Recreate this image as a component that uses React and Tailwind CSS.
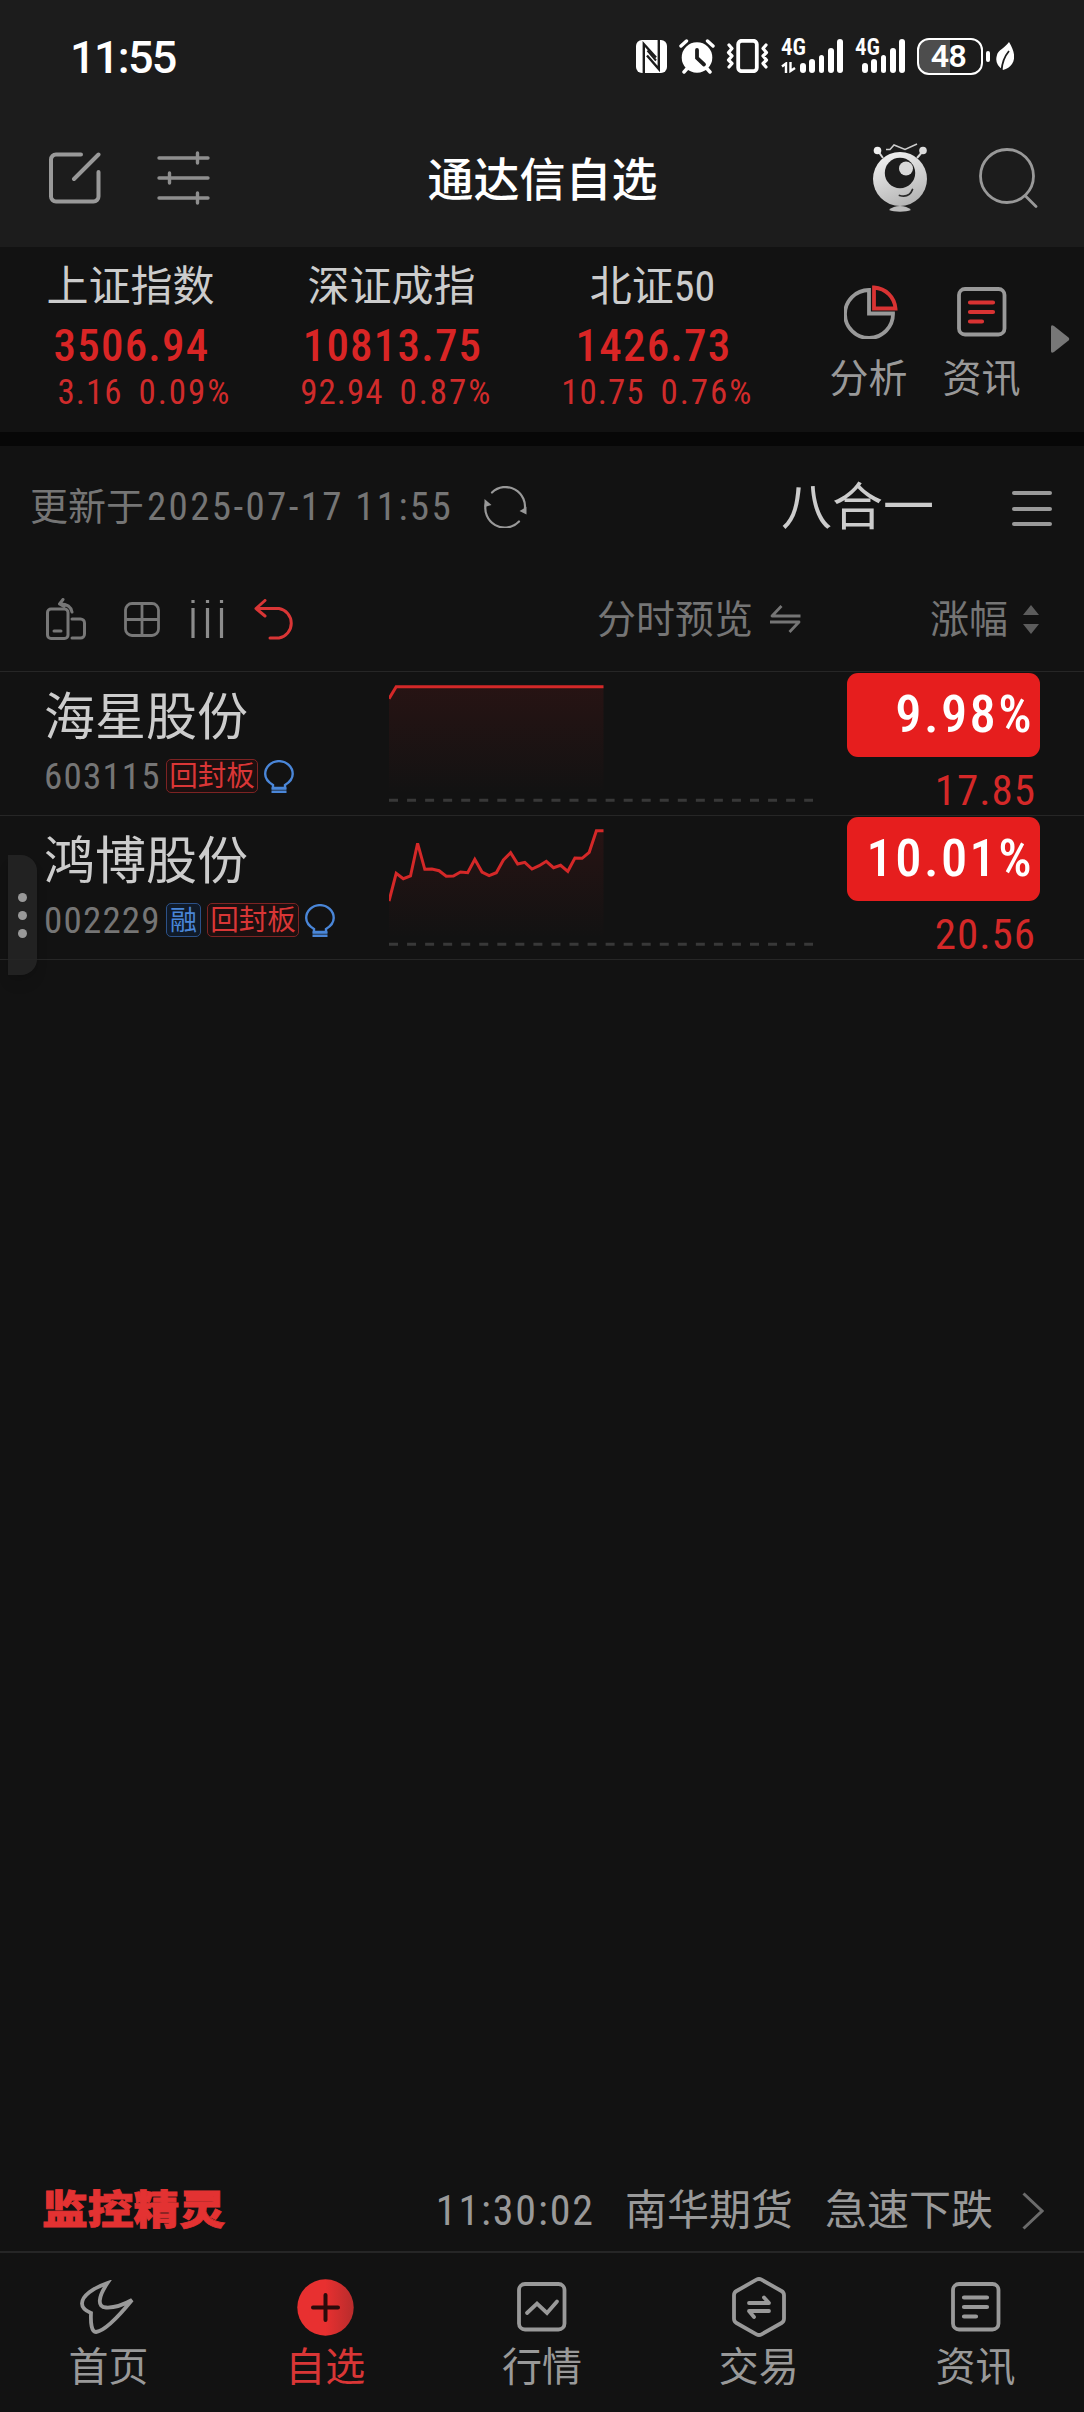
import { useState } from 'react';

const indices = [
  { name: '上证指数', value: '3506.94', change: '3.16', percent: '0.09%' },
  { name: '深证成指', value: '10813.75', change: '92.94', percent: '0.87%' },
  { name: '北证50', value: '1426.73', change: '10.75', percent: '0.76%' },
];

const stocks = [
  {
    code: '603115',
    name: '海星股份',
    margin: false,
    tag: '回封板',
    percent: '9.98%',
    price: '17.85',
    points: [26.7].concat(Array(30).fill(14.7)),
  },
  {
    code: '002229',
    name: '鸿博股份',
    margin: true,
    tag: '回封板',
    percent: '10.01%',
    price: '20.56',
    points: [
      85, 57.3, 62.7, 60, 27.3, 53.3, 53, 54.7, 60.3, 60, 56, 56.7, 43.3, 56, 59.7, 56.7,
      44, 36.7, 48, 46.3, 53, 49.7, 45.3, 51.7, 49.3, 55.3, 42, 42.3, 36.3, 14.7, 14.7,
    ],
  },
];

/* ---------- status bar icons ---------- */

const NfcIcon = () => (
  <svg width="31" height="33" viewBox="0 0 31 33" fill="none">
    <rect width="31" height="33" rx="6" fill="#fff" />
    <path d="M7.8 33V4L20 17.5M22.8 0V29L11 15.5" stroke="#1c1c1c" strokeWidth="2.4" />
    <path d="M11.5 10.5 20 20.5" stroke="#1c1c1c" strokeWidth="2" />
  </svg>
);

const AlarmIcon = () => (
  <svg width="36" height="35" viewBox="0 0 36 35" fill="none" strokeLinecap="round">
    <circle cx="18" cy="18.5" r="15.3" fill="#fff" />
    <path d="M2 7 7.5 2M34 7 28.5 2M5 33l4-4.5M31 33l-4-4.5" stroke="#fff" strokeWidth="3.4" />
    <path d="M18 11v8l7 6.5" stroke="#1c1c1c" strokeWidth="3.8" />
  </svg>
);

const VibrateIcon = () => (
  <svg width="43" height="34" viewBox="0 0 43 34" fill="none" stroke="#fff" strokeLinejoin="round" strokeLinecap="round">
    <rect x="12.2" y="1.8" width="18.6" height="30.4" rx="3.5" strokeWidth="3.8" />
    <path d="M3 6l3 3.5-3.5 4L6 17l-3.5 4L6 24.5 3 28M40 6l-3 3.5 3.5 4L37 17l3.5 4-3.5 3.5 3 3.5" strokeWidth="3.2" />
  </svg>
);

const barHeights = [10, 14, 18, 25, 34];

const SignalBars = () => (
  <div className="flex items-end gap-[3.4px]">
    {barHeights.map((h) => (
      <span key={h} className="w-[5.9px] rounded-full bg-white" style={{ height: h }} />
    ))}
  </div>
);

const Signal = ({ data }) => (
  <div className={data ? 'relative flex h-[34px] w-[62px] items-end justify-end' : 'relative flex h-[34px] w-[50px] items-end justify-end'}>
    <span className="absolute left-0 top-0 text-[23px] font-semibold leading-[18px]">4G</span>
    {data && (
      <svg className="absolute bottom-0 left-0" width="15" height="11" viewBox="0 0 15 11" fill="none" stroke="#fff" strokeWidth="2.4">
        <path d="M1 4.5 5 1.5V11M9.5 0v9L14 6" />
      </svg>
    )}
    <SignalBars />
  </div>
);

const LeafIcon = () => (
  <svg width="18" height="29" viewBox="0 0 18 29" fill="none">
    <path d="M13 0c5 8 7 16 3 22-2 3-5 5-9 6-6-4-8-9-6-15C2 8 9 6 13 0Z" fill="#fff" />
    <path d="M13 9C8 15 6 20 5.500 29" stroke="#1c1c1c" strokeWidth="1.8" />
  </svg>
);

const StatusBar = () => (
  <div className="flex h-[112px] items-center pl-[70px] pr-[70px] text-white">
    <span className="pt-[3px] text-[45px] font-medium leading-[50px] tracking-[-1.700px] font-stretch-100%">11:55</span>
    <div className="ml-auto flex items-center">
      <NfcIcon />
      <span className="ml-[12px]"><AlarmIcon /></span>
      <span className="ml-[11px]"><VibrateIcon /></span>
      <span className="ml-[12px]"><Signal data /></span>
      <span className="ml-[12px]"><Signal /></span>
      <div className="ml-[12px] flex h-[37px] w-[66px] items-center justify-center rounded-[12px] border-[2.5px] border-white bg-linear-to-r from-[#4d4d4d] from-50% to-[#1c1c1c] to-50% pr-[3px] text-[32px] font-semibold leading-none tracking-[-0.500px] font-stretch-100%">
        48
      </div>
      <span className="ml-[3px] h-[11px] w-[4px] rounded-sm bg-white" />
      <span className="ml-[6px]"><LeafIcon /></span>
    </div>
  </div>
);

/* ---------- title bar ---------- */

const EditIcon = () => (
  <svg width="52" height="52" viewBox="0 0 52 52" fill="none" stroke="#999" strokeWidth="4" strokeLinecap="round">
    <path d="M32 2.500H7a5 5 0 0 0-5 5v37a5 5 0 0 0 5 5h37.500a5 5 0 0 0 5-5V20M49.500 2.500 25 27" />
  </svg>
);

const SettingsIcon = () => (
  <svg width="53" height="54" viewBox="0 0 53 54" fill="none" stroke="#8e8e8e" strokeWidth="3.4" strokeLinecap="round">
    <path d="M2 7h49M2 27h49M2 47h49M40.500 2v10M12.500 22v10M40.500 42v10" />
  </svg>
);

const RobotIcon = () => (
  <svg width="54" height="69" viewBox="0 0 54 69" fill="none">
    <defs>
      <linearGradient id="robot" x1="0.3" y1="0" x2="0.7" y2="1">
        <stop offset="0" stopColor="#f0f0f0" />
        <stop offset="1" stopColor="#b2b2b2" />
      </linearGradient>
    </defs>
    <path d="M5 8l5 7M50 8l-6 7" stroke="#d8d8d8" strokeWidth="2" />
    <circle cx="4.500" cy="7.500" r="3.800" fill="#f0f0f0" />
    <circle cx="50" cy="7.500" r="3.800" fill="#dcdcdc" />
    <path d="M13 6.500h4l4-4.500 11 4.500L44 1" stroke="#ccc" strokeWidth="1.500" />
    <circle cx="27" cy="36" r="27" fill="url(#robot)" />
    <circle cx="27" cy="30" r="15.200" fill="#1c1c1c" />
    <circle cx="33" cy="25.500" r="7" fill="#d8d8d8" />
    <path d="M26.500 52.500c6 1.500 11-.5 13-6" stroke="#2a2a2a" strokeWidth="1.800" strokeLinecap="round" />
    <path d="M16 67c5-5.500 17-5.500 22 0-5 2.200-17 2.200-22 0Z" fill="#bbb" />
  </svg>
);

const SearchIcon = () => (
  <svg width="59" height="60" viewBox="0 0 59 60" fill="none" stroke="#999" strokeWidth="2.800" strokeLinecap="round">
    <circle cx="28" cy="28" r="26.500" />
    <path d="M46.500 48 57 58.500" />
  </svg>
);

const TitleBar = () => (
  <div className="flex h-[135px] items-center pl-[49px] pr-[46px] pb-[4px]">
    <button className="w-[52px]"><EditIcon /></button>
    <button className="ml-[56px] w-[53px]"><SettingsIcon /></button>
    <h1 className="flex-1 pl-[2px] pt-[5px] text-center text-[46px] font-medium leading-[60px] text-white">通达信自选</h1>
    <button className="w-[54px]"><RobotIcon /></button>
    <button className="ml-[52px] w-[59px]"><SearchIcon /></button>
  </div>
);

/* ---------- index strip ---------- */

const PieIcon = () => (
  <svg width="54" height="54" viewBox="0 0 54 54" fill="none" strokeWidth="3.800">
    <path d="M25 5A24 24 0 1 0 49 28.500H25Z" stroke="#999" />
    <path d="M30 2.500v21h21.500C50.500 12 42 3.500 30 2.500Z" stroke="#d93333" />
  </svg>
);

const NewsIcon = ({ lines }) => (
  <svg width="50" height="50" viewBox="0 0 50 50" fill="none" strokeLinecap="round">
    <rect x="2" y="2" width="45.500" height="45.500" rx="6" stroke="#999" strokeWidth="3.800" />
    <path d="M13 15.500h23M13 25h23M13 34.500h12" stroke={lines} strokeWidth="4.200" />
  </svg>
);

const IndexStrip = () => (
  <section className="flex h-[185px]">
    {indices.map((item) => (
      <div key={item.name} className="flex w-[261px] flex-col items-center pt-[16px]">
        <div className="h-[48px] text-[42px] leading-[48px] text-[#ccc]">{item.name}</div>
        <div className="h-[70px] text-[45px] font-medium leading-[70px] tracking-[1.200px] pl-[2px] text-[#d92525]">{item.value}</div>
        <div className="grid w-full grid-cols-2 gap-[16px] text-[35px] leading-[24px] text-[#cf2b2b]">
          <span className="text-right tracking-[1px]">{item.change}</span>
          <span className="tracking-[1.900px]">{item.percent}</span>
        </div>
      </div>
    ))}
    <div className="ml-[29px] flex w-[113px] flex-col items-center pt-[38px] text-[39px] leading-[48px] text-[#999]">
      <span className="ml-[4px]"><PieIcon /></span>
      <span className="mt-[16px]">分析</span>
    </div>
    <div className="flex w-[113px] flex-col items-center pt-[40px] text-[39px] leading-[48px] text-[#999]">
      <span className="ml-px"><NewsIcon lines="#d93333" /></span>
      <span className="mt-[18px]">资讯</span>
    </div>
    <svg className="ml-[13px] mt-[78px]" width="19" height="28" viewBox="0 0 19 28">
      <path d="M0 2Q0-1 3 1L17.500 12.500Q19 14 17.500 15.500L3 27Q0 29 0 26Z" fill="#777" />
    </svg>
  </section>
);

/* ---------- update row + toolbar ---------- */

const RefreshIcon = () => (
  <svg width="43" height="42" viewBox="0 0 43 42" fill="none">
    <path d="M8 6.500A19.500 19.500 0 0 1 40.500 25M35 35.500A19.500 19.500 0 0 1 2 17" stroke="#999" strokeWidth="2.200" strokeLinecap="round" />
    <path d="M42.500 21v7.500L35.500 25ZM.5 21v-8L7.500 19Z" fill="#999" />
  </svg>
);

const UpdateRow = () => (
  <section className="flex h-[121px] items-center pl-[30px] pr-[32px]">
    <span className="pt-px text-[38px] leading-[50px] text-[#757575]">
      更新于<span className="pl-[3px] text-[39px] tracking-[2.350px]">2025-07-17 11:55</span>
    </span>
    <span className="ml-[31px]"><RefreshIcon /></span>
    <span className="ml-auto pt-[3px] text-[51px] leading-[60px] text-[#ccc]">八合一</span>
    <div className="ml-[78px] mt-[4px] flex w-[40px] flex-col gap-[11.500px]">
      <span className="h-[4px] rounded-full bg-[#999]" />
      <span className="h-[4px] rounded-full bg-[#999]" />
      <span className="h-[4px] rounded-full bg-[#999]" />
    </div>
  </section>
);

const RotateIcon = () => (
  <svg width="41" height="42" viewBox="0 0 41 42" fill="none" stroke="#777" strokeWidth="3" strokeLinecap="round" strokeLinejoin="round">
    <rect x="1.500" y="11" width="20.500" height="29.500" rx="3.500" />
    <path d="M8 33h7M26 21h8.500a4 4 0 0 1 4 4v11a4 4 0 0 1-4 4H26M17 1.500 13.500 6 18 8.500M14 6c7 0 11 2 12 8" />
  </svg>
);

const GridIcon = () => (
  <svg width="36" height="35" viewBox="0 0 36 35" fill="none" stroke="#777" strokeWidth="2.800">
    <rect x="1.500" y="1.500" width="33" height="32" rx="6.500" />
    <path d="M18 1.500v32M1.500 17.500h33" />
  </svg>
);

const ColumnsIcon = () => (
  <svg width="33" height="38" viewBox="0 0 33 38" fill="none" stroke="#8c8c8c" strokeWidth="3.200">
    <path d="M2 0v3M2 8v30M16.500 0v3M16.500 8v30M30.500 0v3M30.500 8v30" />
  </svg>
);

const UndoIcon = () => (
  <svg width="42" height="41" viewBox="0 0 42 41" fill="none" stroke="#d93636" strokeWidth="3" strokeLinecap="round" strokeLinejoin="round">
    <path d="M11 1.500 2 9.500l9 7.500M2 9.500h23a15 15 0 0 1 0 29.500h-9" />
  </svg>
);

const SwapIcon = () => (
  <svg width="31" height="28" viewBox="0 0 31 28" fill="none" stroke="#757575" strokeWidth="2.800" strokeLinejoin="round">
    <path d="M11.500 1 2 11h28.500M0 17h29L19.500 27" />
  </svg>
);

const Toolbar = () => (
  <section className="flex h-[104px] items-center pl-[46px] pr-[45px]">
    <RotateIcon />
    <span className="ml-[37px]"><GridIcon /></span>
    <span className="ml-[31px]"><ColumnsIcon /></span>
    <span className="ml-[30px]"><UndoIcon /></span>
    <span className="ml-auto pt-px text-[39px] leading-[50px] text-[#757575]">分时预览</span>
    <span className="ml-[17px]"><SwapIcon /></span>
    <span className="ml-[129px] pt-px text-[39px] leading-[50px] text-[#757575]">涨幅</span>
    <svg className="ml-[15px]" width="16" height="29" viewBox="0 0 16 29" fill="#5c5c5c">
      <path d="M8 0 16 10H0ZM8 29 0 19h16Z" />
    </svg>
  </section>
);

/* ---------- stock list ---------- */

const BulbIcon = () => (
  <svg width="30" height="33" viewBox="0 0 30 33" fill="none" stroke="#4a86d8" strokeWidth="2.400">
    <path d="M9 28v-3C4 22 1.200 18.500 1.200 14a13.700 12.800 0 0 1 27.500 0c0 4.500-2.700 8-7.700 11v3Z" />
    <path d="M7.500 31.800h15M7.500 28.500h15" />
  </svg>
);

const Sparkline = ({ points, id }) => {
  const step = 214.5 / (points.length - 1);
  const line = points.map((y, i) => `${(i * step).toFixed(1)},${y}`).join(' ');
  return (
    <svg width="424" height="143" viewBox="0 0 424 143" fill="none">
      <defs>
        <linearGradient id={id} gradientUnits="userSpaceOnUse" x1="0" y1="14" x2="0" y2="122">
          <stop offset="0" stopColor="#e62020" stopOpacity="0.1" />
          <stop offset="1" stopColor="#e62020" stopOpacity="0" />
        </linearGradient>
      </defs>
      <polygon points={`0,122 ${line} 214.5,122`} fill={`url(#${id})`} />
      <polyline points={line} stroke="#d42828" strokeWidth="3" />
      <path d="M0 128.300H424" stroke="#383838" strokeWidth="3" strokeDasharray="9 9.050" />
    </svg>
  );
};

const StockRow = ({ stock }) => (
  <li className="flex h-[144px] border-b border-[#262626]">
    <div className="w-[389px] pl-[44px] pt-[16px]">
      <div className="h-[60px] text-[51px] leading-[60px] text-[#ccc]">{stock.name}</div>
      <div className="flex h-[56px] items-center">
        <span className="w-[122px] pt-px text-[37px] leading-[56px] tracking-[1.200px] text-[#757575]">{stock.code}</span>
        {stock.margin && (
          <span className="mr-[6px] flex h-[34px] w-[35px] items-center justify-center rounded-[5px] border border-[#2c5188] bg-[#101a28] pt-[2px] text-[27px] leading-none text-[#4a86d8]">融</span>
        )}
        <span className="mr-[6px] flex h-[34px] w-[92px] items-center justify-center rounded-[5px] border border-[#7d2323] bg-[#1d1010] pt-[2px] text-[28.500px] leading-none text-[#d93636]">{stock.tag}</span>
        <BulbIcon />
      </div>
    </div>
    <Sparkline points={stock.points} id={`fill-${stock.code}`} />
    <div className="ml-auto mr-[44px] w-[193px] pt-px text-right">
      <div className="h-[84px] rounded-[11px] bg-[#e61e1e] pr-[6px] text-[52.500px] font-medium leading-[83px] tracking-[2.400px] text-white">{stock.percent}</div>
      <div className="mt-[8px] h-[50px] pr-[4px] text-[43px] leading-[51px] tracking-[1px] text-[#d42828]">{stock.price}</div>
    </div>
  </li>
);

/* ---------- bottom ---------- */

const MonitorBar = () => (
  <section className="flex h-[82px] items-center pl-[42px] pr-[40px] pt-[2px] text-[42px] leading-[50px] text-[#999]">
    <span className="origin-center scale-y-[0.86] text-[45.800px] font-black text-[#e33232] [-webkit-text-stroke:1px]">监控精灵</span>
    <span className="ml-auto tracking-[1.900px]">11:30:02</span>
    <span className="ml-[30px]">南华期货</span>
    <span className="ml-[32px]">急速下跌</span>
    <svg className="ml-[29px]" width="22" height="38" viewBox="0 0 22 38" fill="none" stroke="#6b6b6b" strokeWidth="3">
      <path d="M1.500 1.500 20 19 1.500 36.500" />
    </svg>
  </section>
);

const HomeIcon = () => (
  <svg width="57" height="54" viewBox="0 0 57 54" fill="none" stroke="#999" strokeWidth="3.800">
    <path d="M27.500 3C13 8 2 16 2 23.500c0 4 3 7 9 9.500-.5 10 .5 19 5 19C24 51 39 36 52 20 43 25 34 28 26 27.500 17 27 18 17 27.500 3Z" />
  </svg>
);

const PlusIcon = () => (
  <svg width="57" height="57" viewBox="0 0 57 57" fill="none">
    <defs>
      <linearGradient id="plus">
        <stop offset="0.5" stopColor="#e83030" />
        <stop offset="1" stopColor="#b82c2c" />
      </linearGradient>
    </defs>
    <circle cx="28.500" cy="28.500" r="28.200" fill="url(#plus)" />
    <path d="M28.500 16v25M16 28.500h25" stroke="#2a0b0b" strokeWidth="4" strokeLinecap="round" />
  </svg>
);

const ChartIcon = () => (
  <svg width="50" height="50" viewBox="0 0 50 50" fill="none" stroke="#999" strokeWidth="3.800">
    <rect x="2" y="2" width="45.500" height="45.500" rx="6" />
    <path d="m10 31 10-9.500 10 9.500 10-11.500" strokeLinecap="round" />
  </svg>
);

const TradeIcon = () => (
  <svg width="54" height="60" viewBox="0 0 54 60" fill="none" stroke="#999" strokeWidth="3.800" strokeLinecap="round" strokeLinejoin="round">
    <path d="M24.500 2.700a5 5 0 0 1 5 0L49.500 14a5 5 0 0 1 2.500 4.300v23.400a5 5 0 0 1-2.500 4.300l-20 11.300a5 5 0 0 1-5 0L4.500 46A5 5 0 0 1 2 41.700V18.300A5 5 0 0 1 4.500 14Z" />
    <path d="M17 26h20l-5-5.500M37 34H17l5 6" />
  </svg>
);

const tabs = [
  { label: '首页', icon: <HomeIcon /> },
  { label: '自选', icon: <PlusIcon /> },
  { label: '行情', icon: <ChartIcon /> },
  { label: '交易', icon: <TradeIcon /> },
  { label: '资讯', icon: <NewsIcon lines="#999" /> },
];

const App = () => {
  const [active, setActive] = useState('自选');

  return (
    <div className="relative flex h-[2412px] w-[1084px] flex-col overflow-hidden bg-[#121212] font-[Roboto,'Noto_Sans_CJK_SC',sans-serif] font-stretch-75%">
      <header className="bg-[#1c1c1c]">
        <StatusBar />
        <TitleBar />
      </header>
      <IndexStrip />
      <div className="h-[14px] bg-[#070707]" />
      <UpdateRow />
      <Toolbar />
      <ul className="border-t border-[#262626]">
        {stocks.map((stock) => (
          <StockRow key={stock.code} stock={stock} />
        ))}
      </ul>

      <div className="flex-1" />
      <MonitorBar />
      <nav className="grid h-[161px] grid-cols-5 border-t-2 border-[#262626]">
        {tabs.map((tab) => (
          <button key={tab.label} onClick={() => setActive(tab.label)} className="flex flex-col items-center pt-[24px]">
            <span className="flex h-[60px] items-center">{tab.icon}</span>
            <span className={`mt-[7px] text-[40px] leading-[48px] ${active === tab.label ? 'text-[#d93636]' : 'text-[#999]'}`}>
              {tab.label}
            </span>
          </button>
        ))}
      </nav>

      {/* drag handle floating over the list */}
      <div className="absolute left-[8px] top-[855px] flex h-[120px] w-[29px] flex-col items-center justify-center gap-[9px] rounded-r-[16px] bg-[#262626]/85 shadow-lg">
        <span className="h-[9px] w-[9px] rounded-full bg-[#999]" />
        <span className="h-[9px] w-[9px] rounded-full bg-[#999]" />
        <span className="h-[9px] w-[9px] rounded-full bg-[#999]" />
      </div>
    </div>
  );
};

export default App;
